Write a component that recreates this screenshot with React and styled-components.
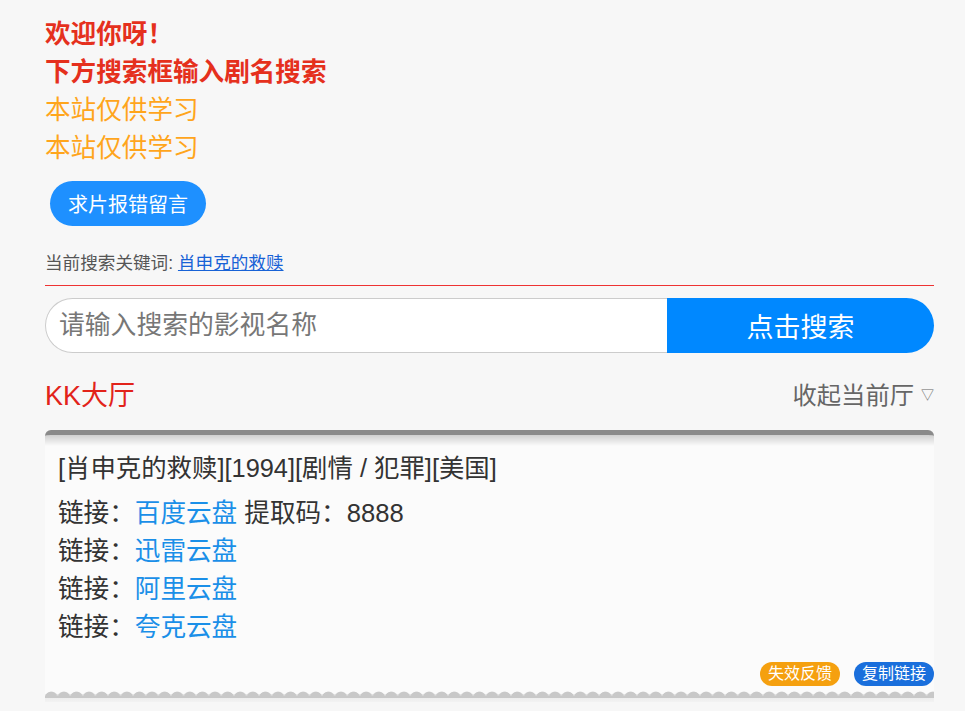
import React from 'react';
import styled, { createGlobalStyle } from 'styled-components';

const GlobalStyle = createGlobalStyle`
    body {
        margin: 0;
        background: #f7f7f7;
        font-family: "Liberation Sans", "Noto Sans CJK SC", sans-serif;
    }
`;

const Page = styled.div`
    width: 889px;
    padding: 15px 0 0 45px;
`;

const Notice = styled.div`
    font-size: 25.6px;
    line-height: 38px;
    color: ${p => (p.$warn ? '#e5301d' : '#ffa51c')};
    font-weight: ${p => (p.$warn ? 'bold' : 'normal')};
`;

const PillButton = styled.button`
    margin: 14px 0 0 5px;
    height: 45px;
    padding: 0 18px;
    border: none;
    border-radius: 23px;
    background: #1e90ff;
    color: #fff;
    font-family: inherit;
    font-size: 20px;
    cursor: pointer;
`;

const Keyword = styled.div`
    margin-top: 25px;
    font-size: 17.6px;
    line-height: 24px;
    color: #555;

    a {
        color: #1762d6;
        text-decoration: underline;
    }
`;

const Divider = styled.div`
    height: 1px;
    background: #e33;
    margin-top: 10px;
`;

const SearchBar = styled.form`
    display: flex;
    height: 55px;
    margin-top: 12px;
`;

const SearchInput = styled.input`
    flex: 1;
    min-width: 0;
    box-sizing: border-box;
    border: 1px solid #ccc;
    border-right: none;
    border-radius: 28px 0 0 28px;
    background: #fff;
    padding: 0 13px;
    font-family: inherit;
    font-size: 25.8px;
    outline: none;

    &::placeholder {
        color: #777;
    }
`;

const SearchButton = styled.button`
    width: 267px;
    border: none;
    border-radius: 0 28px 28px 0;
    background: #0088ff;
    color: #fff;
    font-family: inherit;
    font-size: 27px;
    cursor: pointer;
`;

const HallHeader = styled.div`
    display: flex;
    justify-content: space-between;
    align-items: center;
    margin-top: 21px;
    height: 38px;
`;

const HallTitle = styled.h2`
    margin: 0;
    font-size: 27px;
    font-weight: normal;
    color: #e2231a;
`;

const Collapse = styled.span`
    font-size: 24.3px;
    color: #666;
    display: flex;
    align-items: center;

    small {
        font-size: 13px;
        margin-left: 7px;
    }
`;

const Card = styled.div`
    margin-top: 18px;
    border-top: 5px solid #8a8a8a;
    border-radius: 6px 6px 0 0;
    background: linear-gradient(#cfcfcf, #fbfbfb 11px);
    padding: 14px 0 0 13px;
`;

const MovieTitle = styled.div`
    font-size: 25.4px;
    line-height: 38px;
    color: #333;
`;

const LinkList = styled.div`
    margin-top: 7px;
`;

const LinkRow = styled.div`
    font-size: 25.6px;
    line-height: 38px;
    color: #333;

    a {
        color: #1a8fe8;
        text-decoration: none;
    }
`;

const Actions = styled.div`
    display: flex;
    justify-content: flex-end;
    gap: 14px;
    margin-top: 16px;
`;

const Badge = styled.span`
    height: 24px;
    line-height: 24px;
    padding: 0 8px;
    border-radius: 12px;
    font-size: 16px;
    color: #fff;
    background: ${p => p.$bg};
`;

/* zigzag paper edge below the card */
const Scallop = styled.div`
    height: 12px;
    margin: 4px 0 0 -13px;
    background:
        radial-gradient(circle at 50% 100%, #c8c8c8 6px, transparent 6.8px) 0 -2px / 12.6px 10px repeat-x,
        linear-gradient(#fbfbfb 0, #fbfbfb 4px, #e6e6e6 4px, #f3f3f3);
`;

const links = [
    { name: '百度云盘', code: '8888' },
    { name: '迅雷云盘' },
    { name: '阿里云盘' },
    { name: '夸克云盘' },
];

export default function App() {
    return (
        <Page>
            <GlobalStyle />
            <Notice $warn>欢迎你呀！</Notice>
            <Notice $warn>下方搜索框输入剧名搜索</Notice>
            <Notice>本站仅供学习</Notice>
            <Notice>本站仅供学习</Notice>

            <PillButton>求片报错留言</PillButton>

            <Keyword>
                当前搜索关键词: <a href="#">肖申克的救赎</a>
            </Keyword>
            <Divider />

            <SearchBar onSubmit={e => e.preventDefault()}>
                <SearchInput placeholder="请输入搜索的影视名称" />
                <SearchButton type="submit">点击搜索</SearchButton>
            </SearchBar>

            <HallHeader>
                <HallTitle>KK大厅</HallTitle>
                <Collapse>收起当前厅<small>▽</small></Collapse>
            </HallHeader>

            <Card>
                <MovieTitle>[肖申克的救赎][1994][剧情 / 犯罪][美国]</MovieTitle>
                <LinkList>
                    {links.map(l => (
                        <LinkRow key={l.name}>
                            链接：<a href="#">{l.name}</a>
                            {l.code && <> 提取码：{l.code}</>}
                        </LinkRow>
                    ))}
                </LinkList>
                <Actions>
                    <Badge $bg="#f5a00f">失效反馈</Badge>
                    <Badge $bg="#1a6fdc">复制链接</Badge>
                </Actions>
                <Scallop />
            </Card>
        </Page>
    );
}
